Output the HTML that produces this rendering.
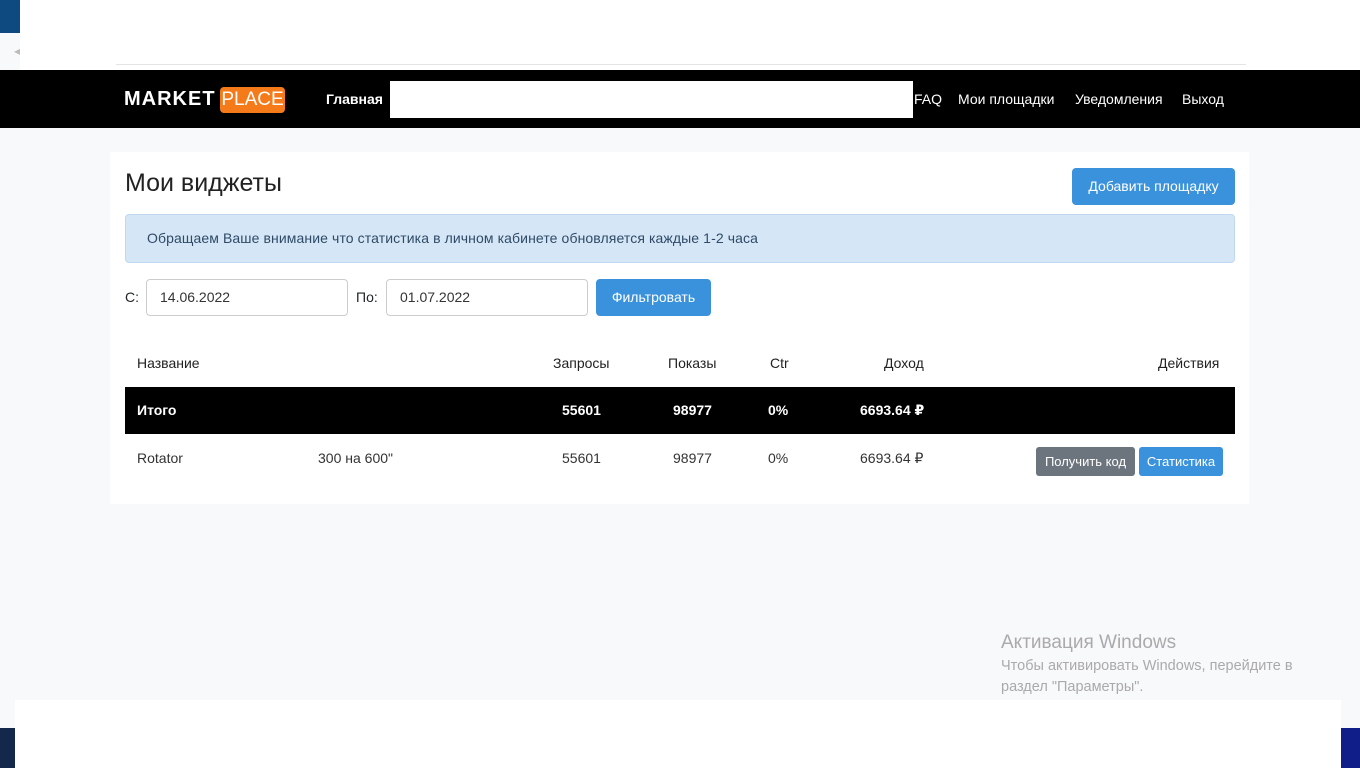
<!DOCTYPE html><html><head><meta charset="utf-8"><style>
*{box-sizing:border-box}body{margin:0;width:1360px;height:768px;background:#f8f9fb;font-family:"Liberation Sans","DejaVu Sans",sans-serif;position:relative;overflow:hidden;color:#212529}
.abs{position:absolute}
</style></head><body>
<div class="abs" style="left:0;top:0;width:20px;height:33px;background:#0e4a80"></div>
<div class="abs" style="left:20px;top:0;width:1340px;height:70px;background:#fff"></div>
<div class="abs" style="left:14px;top:44px;color:#bbb;font-size:12px">◂</div>
<div class="abs" style="left:116px;top:64px;width:1130px;height:1px;background:#e4e4e4"></div>
<div class="abs" style="left:0;top:70px;width:1360px;height:58px;background:#000"></div>
<div class="abs" style="left:124px;top:88px;color:#fff;font-weight:bold;font-size:20px;letter-spacing:1px">MARKET</div>
<div class="abs" style="left:220px;top:87px;width:65px;background:#f47a1a;color:#fff;font-size:19px;text-align:center;border-radius:4px;height:26px;line-height:26px">PLACE</div>
<div class="abs" style="left:326px;top:91px;color:#fff;font-weight:bold;font-size:14px">Главная</div>
<div class="abs" style="left:390px;top:81px;width:523px;height:37px;background:#fff"></div>
<div class="abs" style="left:914px;top:91px;color:#fff;font-size:14px">FAQ</div>
<div class="abs" style="left:958px;top:91px;color:#fff;font-size:14px">Мои площадки</div>
<div class="abs" style="left:1075px;top:91px;color:#fff;font-size:14px">Уведомления</div>
<div class="abs" style="left:1182px;top:91px;color:#fff;font-size:14px">Выход</div>
<div class="abs" style="left:110px;top:152px;width:1139px;height:352px;background:#fff"></div>
<div class="abs" style="left:125px;top:169px;font-size:25px;color:#222">Мои виджеты</div>
<div class="abs" style="left:1072px;top:168px;width:163px;height:37px;background:#3a92dd;color:#fff;border-radius:4px;font-size:14px;text-align:center;line-height:37px">Добавить площадку</div>
<div class="abs" style="left:125px;top:214px;width:1110px;height:49px;background:#d5e7f6;border:1px solid #bfd8ee;border-radius:4px;font-size:14px;letter-spacing:0.1px;color:#2e4a66;padding-left:21px;line-height:47px">Обращаем Ваше внимание что статистика в личном кабинете обновляется каждые 1-2 часа</div>
<div class="abs" style="left:125px;top:289px;font-size:14px">С:</div>
<div class="abs" style="left:146px;top:279px;width:202px;height:37px;border:1px solid #ccc;border-radius:4px;font-size:14px;padding-left:13px;line-height:35px;color:#333">14.06.2022</div>
<div class="abs" style="left:356px;top:289px;font-size:14px">По:</div>
<div class="abs" style="left:386px;top:279px;width:202px;height:37px;border:1px solid #ccc;border-radius:4px;font-size:14px;padding-left:13px;line-height:35px;color:#333">01.07.2022</div>
<div class="abs" style="left:596px;top:279px;width:115px;height:37px;background:#3a92dd;color:#fff;border-radius:4px;font-size:14px;text-align:center;line-height:37px">Фильтровать</div>
<div class="abs" style="top:355px;left:0;width:1360px;font-size:14px;color:#222">
<span class="abs" style="left:137px">Название</span><span class="abs" style="left:553px">Запросы</span><span class="abs" style="left:668px">Показы</span><span class="abs" style="left:770px">Ctr</span><span class="abs" style="left:884px">Доход</span><span class="abs" style="left:1158px">Действия</span></div>
<div class="abs" style="left:125px;top:387px;width:1110px;height:47px;background:#000"></div>
<div class="abs" style="top:402px;left:0;width:1360px;font-size:14px;color:#fff;font-weight:bold">
<span class="abs" style="left:137px">Итого</span><span class="abs" style="left:562px">55601</span><span class="abs" style="left:673px">98977</span><span class="abs" style="left:768px">0%</span><span class="abs" style="left:860px">6693.64 ₽</span></div>
<div class="abs" style="top:450px;left:0;width:1360px;font-size:14px;color:#333">
<span class="abs" style="left:137px">Rotator</span><span class="abs" style="left:318px">300 на 600"</span><span class="abs" style="left:562px">55601</span><span class="abs" style="left:673px">98977</span><span class="abs" style="left:768px">0%</span><span class="abs" style="left:860px">6693.64 ₽</span></div>
<div class="abs" style="left:1036px;top:447px;width:99px;height:29px;background:#6c757d;color:#fff;border-radius:3px;font-size:13px;text-align:center;line-height:29px">Получить код</div>
<div class="abs" style="left:1139px;top:447px;width:84px;height:29px;background:#3a92dd;color:#fff;border-radius:3px;font-size:13px;text-align:center;line-height:29px">Статистика</div>
<div class="abs" style="left:1001px;top:632px;font-size:19px;color:#aaa">Активация Windows</div>
<div class="abs" style="left:1001px;top:656px;font-size:14.5px;color:#aaa;line-height:21px">Чтобы активировать Windows, перейдите в<br>раздел "Параметры".</div>
<div class="abs" style="left:0;top:728px;width:1360px;height:40px;background:linear-gradient(90deg,#13284a,#1a2a6e 50%,#101e8a)"></div>
<div class="abs" style="left:15px;top:700px;width:1326px;height:68px;background:#fff"></div>
</body></html>
